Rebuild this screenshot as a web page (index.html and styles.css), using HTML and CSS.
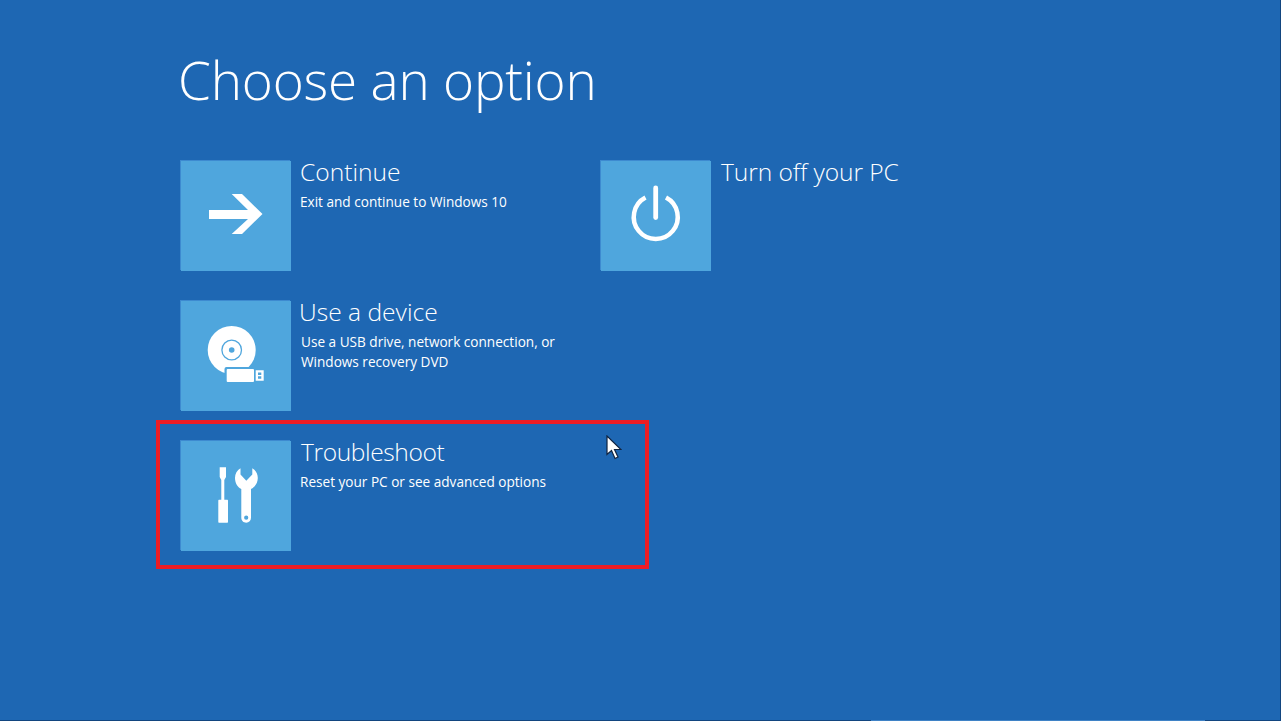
FILE: index.html
```html
<!DOCTYPE html>
<html lang="en">
<head>
<meta charset="utf-8">
<title>Choose an option</title>
<link rel="stylesheet" href="styles.css">
</head>
<body>
<main class="screen">
  <h1 class="title">Choose an option</h1>
  <div class="options">
    <div class="column">
      <div class="option">
        <div class="tile">
          <svg class="icon" viewBox="0 0 110 110"><path d="M28 49H67L50.700 33H61L81.500 53L61 73H50.700L67 58H28Z" fill="#fff"/></svg>
        </div>
        <div class="text">
          <div class="name">Continue</div>
          <div class="desc">Exit and continue to Windows 10</div>
        </div>
      </div>
      <div class="option">
        <div class="tile">
          <svg class="icon" viewBox="0 0 110 110">
            <circle cx="50.700" cy="49" r="24" fill="#fff"/>
            <circle cx="50.700" cy="49" r="9.800" fill="none" stroke="#4fa6dd" stroke-width="1.300"/>
            <circle cx="50.700" cy="49" r="2.800" fill="#4fa6dd"/>
            <rect x="43.500" y="66" width="31" height="17" rx="2" fill="#4fa6dd"/>
            <rect x="45.700" y="68" width="27.300" height="13" rx="1" fill="#fff"/>
            <path d="M74.700 69.300H82.700V79.700H74.700ZM77 71.500V74H80.300V71.500ZM77 75.200V77.700H80.300V75.200Z" fill="#fff" fill-rule="evenodd"/>
          </svg>
        </div>
        <div class="text">
          <div class="name name-device">Use a device</div>
          <div class="desc desc-device">Use a USB drive, network connection, or<br>Windows recovery DVD</div>
        </div>
      </div>
      <div class="option">
        <div class="tile">
          <svg class="icon" viewBox="0 0 110 110">
            <path d="M38.700 26.300H45V36L43.300 39V58.700H46C46.700 58.700 47 59 47 59.700V80.700C47 81.400 46.700 81.700 46 81.700H38.300C37.600 81.700 37.300 81.400 37.300 80.700V59.700C37.300 59 37.600 58.700 38.300 58.700H40.300V39L38.700 36Z" fill="#fff"/>
            <path fill-rule="evenodd" d="M59.500 27.300V33.500L65.300 39.700L71.300 33.500V27.300C74.800 29.300 76.800 33 76.800 37C76.800 42 74 46 70 48V76.800C70 79.800 68 81.700 65.200 81.700C62.400 81.700 60.300 79.800 60.300 76.800V48C56.500 46 54 42 54 37C54 33 56 29.300 59.500 27.300ZM65.200 74.600A2.100 2.100 0 1 0 65.200 78.800A2.100 2.100 0 1 0 65.200 74.600Z" fill="#fff"/>
          </svg>
        </div>
        <div class="text">
          <div class="name name-trouble">Troubleshoot</div>
          <div class="desc">Reset your PC or see advanced options</div>
        </div>
      </div>
    </div>
    <div class="column">
      <div class="option">
        <div class="tile">
          <svg class="icon" viewBox="0 0 110 110">
            <path d="M44.500 36.500A22 22 0 1 0 65 36.500" fill="none" stroke="#fff" stroke-width="4.500"/>
            <path d="M54.700 27V56.500" fill="none" stroke="#fff" stroke-width="4.800" stroke-linecap="round"/>
          </svg>
        </div>
        <div class="text">
          <div class="name name-power">Turn off your PC</div>
        </div>
      </div>
    </div>
  </div>
  <div class="highlight"></div>
  <svg class="cursor" viewBox="0 0 16 25"><path d="M1 1V19.500L5.500 15.500L9 23.500L12 22L8.500 14.500H15Z" fill="#fff" stroke="#10233f" stroke-width="1.200"/></svg>
  <div class="bottom-line"></div>
</main>
</body>
</html>
```

FILE: styles.css
```css
html, body {
  margin: 0;
  padding: 0;
  background: #1e67b3;
}
.screen {
  position: relative;
  box-sizing: border-box;
  width: 1281px;
  height: 721px;
  overflow: hidden;
  padding: 0 0 0 181px;
  background: #1e67b3;
  color: #fff;
  font-family: "Open Sans", "Noto Sans", sans-serif;
  border-right: 1px solid #12457f;
}
.title {
  margin: 0;
  height: 161px;
  box-sizing: border-box;
  padding-top: 41px;
  margin-left: -3px;
  font-size: 53px;
  line-height: 78px;
  letter-spacing: -0.2px;
  font-weight: 300;
}
.options {
  display: flex;
}
.column {
  width: 420px;
  display: flex;
  flex-direction: column;
  gap: 30px;
}
.option {
  display: flex;
  gap: 9px;
  height: 110px;
}
.tile {
  width: 110px;
  height: 110px;
  flex: none;
  background: #4fa6dd;
  box-shadow: -1px -1px 0 #3d8ad0;
}
.icon {
  display: block;
  width: 110px;
  height: 110px;
}
.text {
  margin-top: -1px;
}
.name {
  font-size: 24.600px;
  line-height: 24px;
  font-weight: 300;
}
.name-device {
  margin-left: -1px;
}
.name-trouble {
  margin-left: 1px;
  letter-spacing: -0.400px;
}
.name-power {
  margin-left: 1px;
  letter-spacing: -0.100px;
}
.desc {
  margin-top: 8px;
  font-size: 13.600px;
  line-height: 20px;
  font-weight: 400;
}
.desc-device {
  margin-left: 1px;
}
.highlight {
  position: absolute;
  left: 156px;
  top: 420px;
  width: 493px;
  height: 149px;
  box-sizing: border-box;
  border: 4px solid #ed1c24;
}
.cursor {
  position: absolute;
  left: 606px;
  top: 435px;
  width: 16px;
  height: 25px;
}
.bottom-line {
  position: absolute;
  left: 0;
  right: 0;
  bottom: 0;
  height: 1px;
  background: linear-gradient(to right, #12457f 871px, #3f82c6 871px, #3f82c6 1205px, #12457f 1205px);
}
```
